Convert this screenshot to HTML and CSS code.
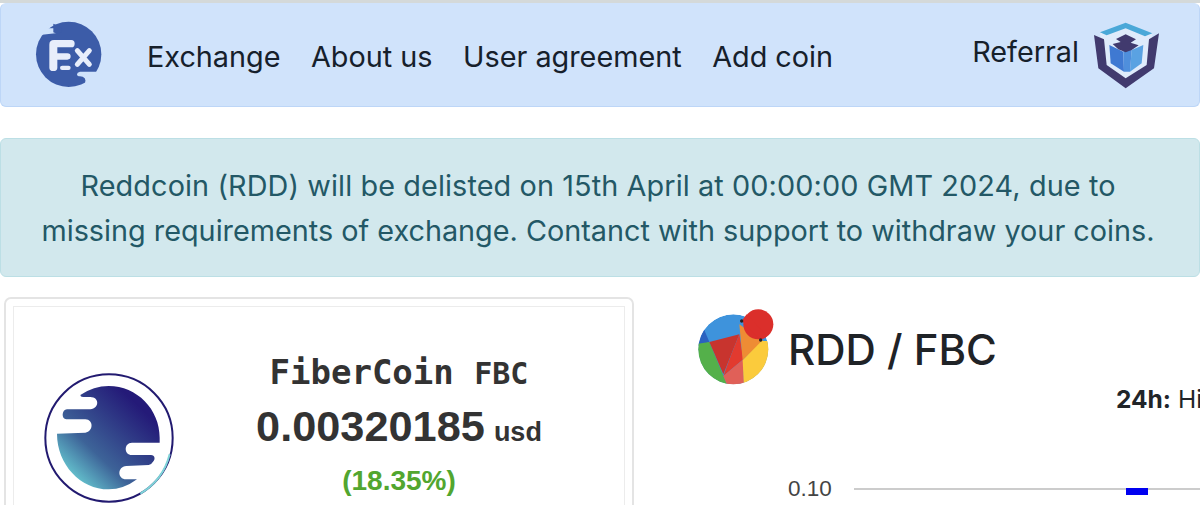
FILE: index.html
```html
<!DOCTYPE html>
<html lang="en">
<head>
<meta charset="utf-8">
<title>Exchange</title>
<link rel="stylesheet" href="styles.css">
</head>
<body>
<div class="topline"></div>
<nav class="navbar">
  <svg class="logo" viewBox="105 66 204 204" aria-label="FEx logo">
    <circle class="logo-disc" cx="206" cy="166" r="98"/>
    <path class="logo-cut" d="M120 88 L166 88 Q176 90 176 96 Q176 102 166 103 L120 108 Z"/>
    <path class="logo-disc" d="M160 74 Q188 82 186 94 Q184 104 170 104 L160 100 Z"/>
    <path class="logo-cut" d="M300 218 L240 218 Q231 220 231 226 Q231 232 240 232 L248 233 Q258 238 256 246 L254 262 L310 262 Z"/>
    <path class="logo-mark" d="M148 137 Q148 123 162 123 L214 123 Q224 123 224 134 Q224 145 214 145 L172 145 L172 163 L202 163 Q212 163 212 172 Q212 182 202 182 L172 182 L172 206 Q172 216 160 216 Q148 216 148 206 Z"/>
    <rect class="logo-mark" x="180" y="200" width="32" height="13" rx="6.5"/>
    <path class="logo-x" d="M232 155 L268 196 M268 155 L232 196"/>
  </svg>
  <ul class="nav-links">
    <li>Exchange</li>
    <li>About us</li>
    <li>User agreement</li>
    <li>Add coin</li>
  </ul>
  <div class="referral">
    <span>Referral</span>
    <svg class="shield" viewBox="429 66 198 201" aria-label="Referral shield">
      <path fill="#dfebfb" d="M450 100 L527 78 L607 100 L595 200 L527 240 L462 200 Z"/>
      <path fill="#4aa8d8" d="M450 97 L527 68 L607 100 L585 109 L527 85 L470 106 Z"/>
      <path fill="#413a6e" d="M432 105 L462 118 L470 195 L527 235 L590 195 L597 118 L627 100 L612 205 L527 265 L445 205 Z"/>
      <path fill="#3f79d2" d="M478 135 L520 155 L522 215 L482 190 Z"/>
      <path fill="#5aa2e2" d="M545 150 L580 135 L575 190 L540 215 Z"/>
      <path fill="#4f8fdc" d="M520 150 L545 150 L540 215 L522 215 Z"/>
      <path fill="#413a6e" d="M527 103 L558 118 L542 128 L566 136 L545 150 L527 157 L505 148 L488 132 L512 126 L498 117 Z"/>
    </svg>
  </div>
</nav>
<div class="alert">
  <span class="alert-first">Reddcoin (RDD) will be delisted on 15th April at 00:00:00 GMT 2024, due to</span><br>
  missing requirements of exchange. Contanct with support to withdraw your coins.
</div>
<main class="content">
  <section class="card">
    <div class="card-inner">
      <svg class="coin" viewBox="131 246 390 390" aria-label="FiberCoin logo">
        <defs>
          <linearGradient id="fbc" gradientUnits="userSpaceOnUse" x1="190" y1="570" x2="410" y2="340">
            <stop offset="0" stop-color="#6fdcdc"/>
            <stop offset=".4" stop-color="#3d6398"/>
            <stop offset="1" stop-color="#241a78"/>
          </linearGradient>
        </defs>
        <circle class="coin-ring" cx="326" cy="441" r="191"/>
        <path class="coin-glint" d="M508 490 A191 191 0 0 1 420 608"/>
        <path fill="url(#fbc)" d="M240 312 Q280 285 325 285 C410 285 478 355 478 440 L478 455 L395 455 C370 455 370 492 395 492 L452 492 C464 492 466 505 458 512 Q452 522 445 522 L378 525 C350 527 350 565 378 565 L410 565 Q370 595 325 595 C240 595 170 520 170 428 L255 425 C280 422 280 385 255 385 L198 385 C182 385 184 355 200 355 L270 355 C298 352 298 318 270 318 L248 318 Q240 318 240 312 Z"/>
      </svg>
      <div class="coin-info">
        <div class="coin-name">FiberCoin <small>FBC</small></div>
        <div class="coin-price">0.00320185 <small>usd</small></div>
        <div class="coin-change">(18.35%)</div>
      </div>
    </div>
  </section>
  <section class="market">
    <header class="pair">
      <svg class="pair-logo" viewBox="54 54 228 228" aria-label="Reddcoin logo">
        <defs>
          <clipPath id="rdd"><circle cx="160" cy="175" r="105"/></clipPath>
        </defs>
        <g clip-path="url(#rdd)">
          <circle cx="160" cy="175" r="105" fill="#3e93dc"/>
          <path fill="#2a62c0" d="M40 170 L72 115 L88 153 Z"/>
          <path fill="#54b04a" d="M40 160 L88 153 L145 290 L40 290 Z"/>
          <path fill="#c8342e" d="M88 153 L178 130 L130 250 Z"/>
          <path fill="#e23a2f" d="M178 130 L190 205 L130 255 L152 195 Z"/>
          <path fill="#e06058" d="M190 205 L192 290 L145 290 L130 255 Z"/>
          <path fill="#ee8c34" d="M178 100 L250 150 L188 208 Z"/>
          <path fill="#fbcb3c" d="M245 150 L290 150 L290 290 L192 290 L188 208 Z"/>
        </g>
        <circle cx="235" cy="100" r="45" fill="#db2f2b"/>
        <path fill="#db2f2b" d="M185 90 L242 147 L262 135 L200 70 Z"/>
        <circle cx="185" cy="90" r="5" fill="#222"/>
        <circle cx="242" cy="147" r="5" fill="#222"/>
      </svg>
      <h1>RDD / FBC</h1>
    </header>
    <div class="stats"><b>24h:</b> High</div>
    <div class="chart">
      <span class="axis-label">0.10</span>
      <div class="axis-line"><i class="bar"></i></div>
    </div>
  </section>
</main>
</body>
</html>
```
FILE: styles.css
```css
* { box-sizing: border-box; }
html, body { margin: 0; padding: 0; height: 505px; overflow: hidden; background: #fff; }
body { font-family: Inter, "Liberation Sans", sans-serif; color: #212529; }

.topline { height: 3px; background: #d4d9d9; }

.navbar {
  height: 104px;
  display: flex;
  align-items: center;
  padding: 0 40px 0 34px;
  background: #d0e3fb;
  border: 1px solid #bdd6f7;
  border-top-color: #d0e3fb;
  border-radius: 6px;
}
.logo { width: 68px; height: 68px; flex: none; }
.logo-disc { fill: #3c5ca8; }
.logo-cut { fill: #d0e3fb; }
.logo-mark { fill: #e8eefb; }
.logo-x { stroke: #e8eefb; stroke-width: 15; stroke-linecap: round; fill: none; }
.nav-links {
  list-style: none;
  display: flex;
  gap: 30.5px;
  margin: 2px 0 0 44px;
  padding: 0;
  font-size: 28.8px;
  color: #16202b;
}
.referral {
  margin-left: auto;
  display: flex;
  align-items: center;
  gap: 14px;
  font-size: 28.8px;
  color: #16202b;
}
.referral span { margin-top: -7px; }
.shield { width: 66px; height: 67px; }

.alert {
  margin-top: 31px;
  height: 139px;
  padding: 24px 16px 0 12px;
  background: #d2e8ed;
  border: 1px solid #bcdfe5;
  border-radius: 6px;
  color: #235866;
  text-align: center;
  font-size: 28.8px;
  line-height: 45px;
}
.alert-first { letter-spacing: 0.11px; }

.content {
  display: flex;
  margin-top: 20px;
  padding-left: 4px;
}
.card {
  flex: none;
  width: 630px;
  height: 240px;
  padding: 7px;
  border: 2px solid #e4e4e4;
  border-radius: 7px;
}
.card-inner {
  height: 100%;
  display: flex;
  border: 1px solid #ececec;
  padding: 66px 0 0 30px;
}
.coin { width: 130px; height: 130px; flex: none; }
.coin-ring { fill: #fff; stroke: #221a70; stroke-width: 6; }
.coin-glint { fill: none; stroke: #7fd4d8; stroke-width: 6; }
.coin-info {
  flex: none;
  width: 400px;
  margin-top: -23px;
  margin-left: 25px;
  text-align: center;
  color: #333;
}
.coin-name {
  font-family: "DejaVu Sans Mono", monospace;
  font-weight: 700;
  font-size: 34px;
  line-height: 44px;
}
.coin-name small { font-size: 30px; }
.coin-price {
  margin-top: 5px;
  font-family: "Liberation Sans", Arial, sans-serif;
  font-weight: 700;
  font-size: 43.3px;
  line-height: 50px;
}
.coin-price small { font-size: 27px; margin-left: -3px; }
.coin-change {
  margin-top: 8px;
  font-family: "Liberation Sans", Arial, sans-serif;
  font-weight: 700;
  font-size: 28px;
  line-height: 32px;
  color: #52a62f;
}

.market { flex: 1; min-width: 0; padding-left: 64px; }
.pair { display: flex; align-items: center; gap: 14px; height: 76px; margin-top: 12px; }
.pair-logo { width: 76px; height: 76px; flex: none; }
.pair h1 { margin: 4px 0 0; font-size: 42px; font-weight: 500; color: #1f2327; }
.stats { margin: -1px 0 0 418px; font-size: 24.5px; line-height: 30px; white-space: nowrap; }
.chart { display: flex; align-items: center; margin-top: 63px; margin-left: 90px; height: 24px; }
.axis-label {
  font-family: "Liberation Sans", Arial, sans-serif;
  font-size: 22.5px;
  color: #444;
  width: 66px;
  flex: none;
}
.axis-line { flex: 1; height: 2px; background: #ccc; position: relative; }
.bar { position: absolute; left: 272px; top: 0; width: 22px; height: 7px; background: #0000f0; }
```
